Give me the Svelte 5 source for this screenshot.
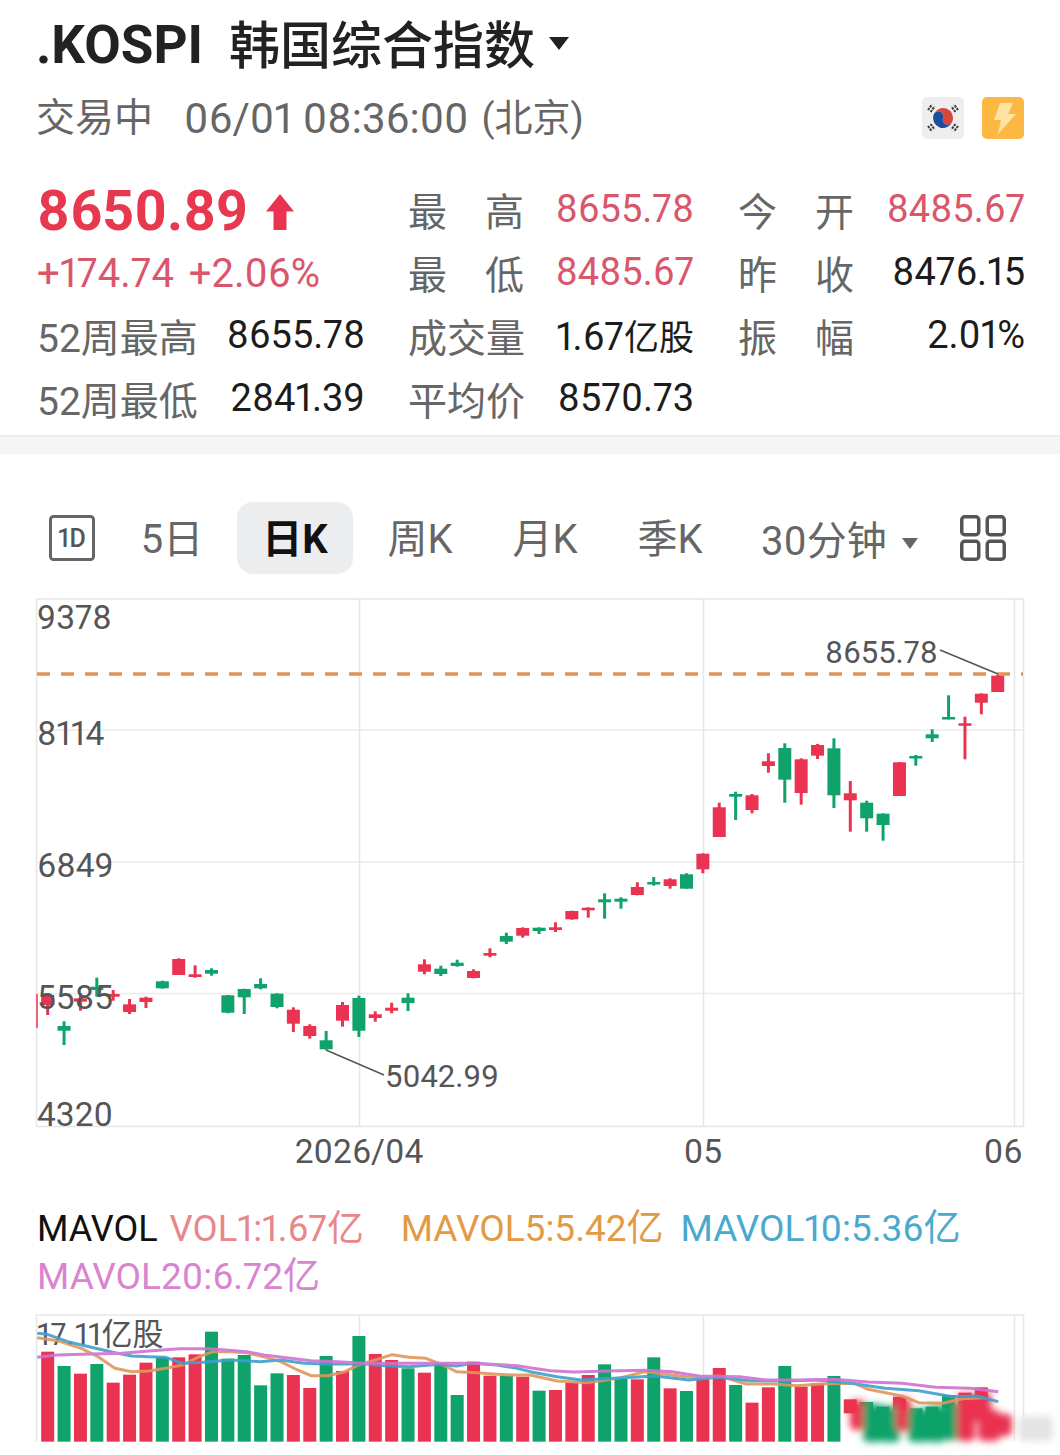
<script>
  const RED = '#ea3350';
  const GREEN = '#0fa26b';

  // x of candle i, same slot is used by the volume bars
  const slot = (i) => 31.3 + 16.38 * i;

  // [index, up?, wick top, body top, body bottom, wick bottom], page pixels
  const candles = [
    [1, 1, 994, 995, 1005, 1015], [2, 0, 1021.3, 1026, 1030.7, 1045], [3, 1, 993.3, 998.3, 1001.7, 1010.7],
    [4, 0, 977.7, 986.7, 990, 996.7], [5, 1, 990, 994, 996.7, 1000.7], [6, 1, 999, 1004.3, 1012, 1014],
    [7, 1, 996.7, 997.7, 1002, 1008], [8, 0, 980.7, 981.3, 988.3, 988.7], [9, 1, 958.3, 959, 975, 975],
    [10, 1, 965.3, 974.3, 977, 977.7], [11, 0, 968.3, 970, 973.7, 975.7], [12, 0, 995, 995.3, 1012.7, 1013.3],
    [13, 0, 988.7, 989, 997.3, 1014], [14, 0, 978.3, 984, 988.3, 989.3], [15, 0, 993.3, 993.7, 1007, 1008.3],
    [16, 1, 1007.3, 1009.7, 1023.7, 1032], [17, 1, 1024.3, 1026, 1036, 1038.7], [18, 0, 1031, 1040.3, 1049.3, 1049.7],
    [19, 1, 1002, 1005, 1020.7, 1026.7], [20, 0, 995.7, 998, 1030.7, 1037], [21, 1, 1011.3, 1014.3, 1018, 1021.7],
    [22, 1, 1002.7, 1007.7, 1010.7, 1013.3], [23, 0, 993.3, 997.7, 1003, 1011], [24, 1, 959.3, 964.3, 971.7, 974.3],
    [25, 0, 965.7, 968.7, 974, 976], [26, 0, 959.7, 962.7, 966, 966.7], [27, 1, 969.3, 971, 978, 978.3],
    [28, 1, 948.3, 953, 955.7, 957.3], [29, 0, 932.7, 936, 941.7, 944], [30, 1, 927.3, 928, 935.7, 937.7],
    [31, 0, 927.3, 927.7, 931, 934], [32, 1, 922.3, 927.3, 930, 932], [33, 1, 910.7, 911, 919.3, 919.7],
    [34, 1, 907.3, 907.7, 910.3, 917.7], [35, 0, 893.3, 899.3, 902.3, 918.7], [36, 0, 897.3, 898.7, 901.7, 908.7],
    [37, 1, 882.3, 887, 895, 895.3], [38, 0, 877, 882, 884, 885.7], [39, 1, 878.3, 879.3, 886, 888.7],
    [40, 0, 873.3, 874.3, 888.7, 888.7], [41, 1, 853.3, 853.7, 869.3, 873.3], [42, 1, 802.7, 807.3, 837, 837],
    [43, 0, 791.7, 794, 796.7, 820], [44, 1, 794, 795.3, 810, 813.3], [45, 1, 753.3, 761.3, 766, 772.7],
    [46, 0, 743.3, 748, 779.7, 802.7], [47, 1, 758.3, 759.3, 793, 804.7], [48, 1, 744, 745, 755.7, 759],
    [49, 0, 738.3, 748.3, 795.3, 808], [50, 1, 781, 793.3, 800.3, 831.7], [51, 0, 800.7, 802.7, 818.3, 831.7],
    [52, 0, 813.3, 813.7, 825, 840.7], [53, 1, 762, 762.3, 796, 796], [54, 0, 755, 756, 758.3, 765.7],
    [55, 0, 729.3, 734.3, 738.3, 742], [56, 0, 695.3, 717, 719.3, 719.3], [57, 1, 716.7, 723.3, 725.7, 759.3],
    [58, 1, 693.3, 693.7, 702.7, 714.3], [59, 1, 675, 675.7, 692, 692]
  ];

  const upByIndex = Object.fromEntries(candles.map((c) => [c[0], c[1]]));

  // bar tops in thirds of a pixel below y=1300, from index 1
  const volumeTops = [
    155, 198, 221, 192, 248, 224, 188, 172, 172, 163, 95, 176, 165, 256, 220, 225, 264, 168, 213, 108,
    162, 180, 205, 218, 190, 285, 185, 227, 228, 230, 272, 270, 248, 225, 193, 235, 238, 172, 265, 273,
    238, 204, 255, 308, 262, 198, 260, 250, 228, 298, 306, 320, 290, 325, 320, 285, 278, 262, 330
  ];
  const volumes = volumeTops.map((z, n) => ({
    x: slot(n + 1),
    y: 1300 + z / 3,
    h: (425 - z) / 3,
    up: upByIndex[n + 1]
  }));

  // the end of the picture is smeared out in the source
  const smears = [
    [850, 1400, 15, 30, RED], [863, 1404, 20, 38, GREEN], [880, 1406, 20, 36, GREEN], [896, 1398, 15, 33, RED],
    [908, 1409, 22, 33, GREEN], [926, 1406, 20, 36, GREEN], [943, 1402, 19, 38, GREEN], [957, 1394, 18, 47, RED],
    [974, 1392, 17, 30, RED], [978, 1410, 22, 31, RED], [994, 1414, 18, 22, RED], [1019, 1416, 34, 25, '#e4e4e4']
  ];

  const toPath = (pts, ox) => pts.map(([x, y]) => `${ox + x / 2.958},${1300 + y / 3}`).join(' ');

  const ma5 = toPath([[110,113],[170,122],[240,145],[290,170],[340,205],[390,215],[440,213],[490,205],[540,195],[590,170],[630,155],[680,155],[730,158],[780,170],[830,185],[880,210],[920,227],[970,227],[1020,215],[1060,195],[1110,180],[1160,164],[1210,172],[1260,175],[1310,195],[1350,215],[1410,218],[1460,222],[1510,225],[1568,225]], 0)
    + ' ' + toPath([[0,225],[80,243],[170,248],[260,235],[340,215],[420,225],[500,235],[560,228],[640,252],[720,252],[790,257],[860,252],[960,250],[1000,268],[1100,288],[1150,308],[1220,310],[1280,296],[1340,293]], 530);
  const ma10 = toPath([[110,100],[140,103],[200,125],[270,142],[340,158],[390,168],[440,170],[490,172],[540,190],[600,187],[680,180],[770,185],[830,180],[900,190],[960,192],[1020,192],[1080,192],[1140,197],[1210,200],[1300,193],[1350,198],[1400,190],[1470,195],[1530,205],[1568,215]], 0)
    + ' ' + toPath([[0,215],[80,230],[150,240],[250,235],[370,228],[470,240],[560,232],[650,242],[750,243],[850,240],[950,250],[1050,265],[1150,272],[1250,290],[1320,288],[1385,305]], 530);
  const ma20 = toPath([[110,172],[170,165],[270,162],[360,160],[450,152],[530,146],[620,146],[730,155],[780,165],[860,175],[920,182],[1000,185],[1070,190],[1150,190],[1250,190],[1400,190],[1530,197],[1568,203]], 0)
    + ' ' + toPath([[0,203],[60,212],[130,216],[230,213],[340,211],[420,215],[500,228],[620,230],[700,240],[800,240],[900,238],[1000,246],[1100,250],[1200,262],[1300,265],[1385,275]], 530);

  const midStats = [
    { label: ['最', '高'], value: '8655.78', red: true },
    { label: ['最', '低'], value: '8485.67', red: true },
    { label: ['成', '交', '量'], value: '1.67', unit: '亿股' },
    { label: ['平', '均', '价'], value: '8570.73' }
  ];
  const rightStats = [
    { label: ['今', '开'], value: '8485.67', red: true },
    { label: ['昨', '收'], value: '8476.15' },
    { label: ['振', '幅'], value: '2.01%' }
  ];
  const tabs = ['周K', '月K', '季K'];
  const gridX = [359.5, 703.5, 1014.5];
  const priceGridY = [730, 862, 993.5];
</script>

<div class="page">
  <header class="head">
    <h1 class="title">
      <span class="title-code">.KOSPI</span><span class="title-cn">韩国综合指数</span>
      <i class="caret caret--title"></i>
    </h1>
    <div class="sub">
      <span class="sub-state">交易中</span>
      <span class="sub-time">06/01 08:36:00</span>
      <span class="sub-zone">(北京)</span>
      <span class="badges">
        <svg class="badge" viewBox="0 0 42 42" aria-hidden="true">
          <rect width="42" height="42" rx="5" fill="#eeeeee" />
          <path d="M11 21a10 10 0 0 1 20 0a5 5 0 0 1-10 0a5 5 0 0 0-10 0z" fill="#d9473c" transform="rotate(20 21 21)" />
          <path d="M11 21a5 5 0 0 1 10 0a5 5 0 0 0 10 0a10 10 0 0 1-20 0z" fill="#1b4f9e" transform="rotate(20 21 21)" />
          <g stroke="#3a3a3a" stroke-width="2" stroke-dasharray="2.4 .9">
            <path d="M6 13l4-5.5M8.6 15l4-5.5" />
            <path d="M36 13l-4-5.5M33.4 15l-4-5.5" />
            <path d="M6 29l4 5.5M8.6 27l4 5.5" />
            <path d="M36 29l-4 5.5M33.4 27l-4 5.5" />
          </g>
        </svg>
        <svg class="badge" viewBox="0 0 42 42" aria-hidden="true">
          <rect width="42" height="42" rx="5" fill="#fdb843" />
          <path d="M18 6h13l-5 11h8L16 37l3-14h-7z" fill="#fde3a4" />
        </svg>
      </span>
    </div>
  </header>

  <section class="stats">
    <div class="col col--left">
      <div class="row">
        <span class="price">8650.89</span>
        <svg class="arrow" viewBox="0 0 30 36" aria-hidden="true">
          <path d="M15 0L29 17.500H21.500V36H8.500V17.500H1z" fill={RED} />
        </svg>
      </div>
      <div class="row change"><span>+174.74</span><span>+2.06%</span></div>
      <div class="row between"><span class="label">52周最高</span><span>8655.78</span></div>
      <div class="row between"><span class="label">52周最低</span><span>2841.39</span></div>
    </div>
    <div class="col col--mid">
      {#each midStats as s}
        <div class="row between">
          <span class="label spread">{#each s.label as c}<span>{c}</span>{/each}</span>
          <span class:red={s.red}>{s.value}{#if s.unit}<span class="unit">{s.unit}</span>{/if}</span>
        </div>
      {/each}
    </div>
    <div class="col col--right">
      {#each rightStats as s}
        <div class="row between">
          <span class="label spread">{#each s.label as c}<span>{c}</span>{/each}</span>
          <span class:red={s.red}>{s.value}</span>
        </div>
      {/each}
    </div>
  </section>

  <div class="band"></div>

  <nav class="tabs">
    <svg class="tool" viewBox="0 0 46 46" aria-hidden="true">
      <rect x="1.500" y="1.500" width="43" height="43" rx="3" fill="none" stroke="#666" stroke-width="3" />
      <text x="23" y="32" text-anchor="middle" class="tool-text">1D</text>
    </svg>
    <span class="tab tab--five">5日</span>
    <span class="tab tab--on">日K</span>
    {#each tabs as t}
      <span class="tab">{t}</span>
    {/each}
    <span class="tab-more">30分钟<i class="caret caret--tab"></i></span>
    <svg class="tool" viewBox="0 0 46 46" aria-hidden="true">
      <g fill="none" stroke="#555" stroke-width="3.500">
        <rect x="1.750" y="1.750" width="17" height="18" rx="3" />
        <rect x="27.250" y="1.750" width="17" height="18" rx="3" />
        <rect x="1.750" y="26.250" width="17" height="18" rx="3" />
        <rect x="27.250" y="26.250" width="17" height="18" rx="3" />
      </g>
    </svg>
  </nav>

  <svg class="chart" viewBox="0 590 1060 590" aria-label="K线图">
    <rect x="36.500" y="599" width="987" height="527.500" fill="none" stroke="#e6e6e6" stroke-width="1.500" />
    {#each priceGridY as y}
      <line x1="36.500" x2="1023.500" y1={y} y2={y} stroke="#ebebeb" stroke-width="1.500" />
    {/each}
    {#each gridX as x}
      <line x1={x} x2={x} y1="599" y2="1126.500" stroke="#e6e6e6" stroke-width="1.500" />
    {/each}
    <line x1="37" x2="1023" y1="674" y2="674" stroke="#e0935a" stroke-width="3.500" stroke-dasharray="13 11" />

    <line x1="37" x2="37" y1="994" y2="1028" stroke={RED} stroke-width="1.500" />
    {#each candles as [i, up, wt, bt, bb, wb]}
      <line x1={slot(i)} x2={slot(i)} y1={wt} y2={wb} stroke={up ? RED : GREEN} stroke-width="3" />
      <rect x={slot(i) - 6.500} y={bt} width="13" height={Math.max(bb - bt, 2.500)} fill={up ? RED : GREEN} />
    {/each}

    <line x1="940" y1="650" x2="998" y2="674" stroke="#555" stroke-width="1.500" />
    <line x1="326" y1="1050" x2="384" y2="1075" stroke="#555" stroke-width="1.500" />

    <text class="axis" x="37" y="629">9378</text>
    <text class="axis" x="37" y="745">8114</text>
    <text class="axis" x="37" y="876.500">6849</text>
    <text class="axis" x="37" y="1009">5585</text>
    <text class="axis" x="37" y="1126">4320</text>
    <text class="axis axis--note" x="825" y="663">8655.78</text>
    <text class="axis axis--note" x="385" y="1087">5042.99</text>
    <text class="axis" x="359" y="1162.500" text-anchor="middle">2026/04</text>
    <text class="axis" x="703" y="1162.500" text-anchor="middle">05</text>
    <text class="axis" x="1003" y="1162.500" text-anchor="middle">06</text>
  </svg>

  <div class="legend">
    <span class="leg-name">MAVOL</span>
    <span class="leg-v1">VOL1:1.67亿</span>
    <span class="leg-5">MAVOL5:5.42亿</span>
    <span class="leg-10">MAVOL10:5.36亿</span>
    <span class="leg-20">MAVOL20:6.72亿</span>
  </div>

  <svg class="volume" viewBox="0 1301 1060 154" aria-label="成交量">
    <defs>
      <filter id="smear" x="-30%" y="-30%" width="160%" height="160%">
        <feGaussianBlur stdDeviation="3.500" />
      </filter>
    </defs>
    <path d="M36.500 1441.500V1315H1023.500V1441.500" fill="none" stroke="#e8e8e8" stroke-width="1.500" />
    {#each gridX as x}
      <line x1={x} x2={x} y1="1315" y2="1441" stroke="#e6e6e6" stroke-width="1.500" />
    {/each}
    <text class="axis axis--vol" x="37" y="1345">17.11亿股</text>
    {#each volumes as v, n}
      {#if n < 49}
        <rect x={v.x - 6.500} y={v.y} width="13" height={v.h} fill={v.up ? RED : GREEN} />
      {:else if n < 58}
        <rect x={v.x - 6.500} y={v.y} width="13" height="14" fill={v.up ? RED : GREEN} />
      {/if}
    {/each}
    <g filter="url(#smear)">
      {#each smears as [x, y, w, h, fill]}
        <rect {x} {y} width={w} height={h} rx="5" {fill} />
      {/each}
    </g>
    <g fill="none" stroke-width="3" stroke-linejoin="round" opacity="0.9">
      <polyline points={ma5} stroke="#e0975a" />
      <polyline points={ma10} stroke="#3fa0cc" />
      <polyline points={ma20} stroke="#cf72d0" />
    </g>
  </svg>
</div>

<style>
  :global(body) {
    margin: 0;
    background: #fff;
  }

  .page {
    width: 1060px;
    height: 1455px;
    overflow: hidden;
    font-family: Roboto, "Noto Sans CJK SC", sans-serif;
    font-size: 38px;
    font-variant-numeric: proportional-nums;
    color: #1c1c1c;
  }

  .head {
    padding: 0 36px 0 36px;
  }

  .title {
    margin: 0;
    height: 84px;
    display: flex;
    align-items: center;
    font-size: 51px;
    font-weight: 500;
    color: #222;
  }

  .title-code {
    margin-top: 6px;
    font-size: 53px;
    font-weight: 700;
  }

  .title-cn {
    margin-left: 26px;
  }

  .caret {
    display: inline-block;
    width: 0;
    height: 0;
    border-style: solid;
    border-color: #222 transparent transparent;
  }

  .caret--title {
    margin: 2px 0 0 14px;
    border-width: 13px 10px 0;
  }

  .caret--tab {
    margin-left: 15px;
    vertical-align: 6px;
    border-width: 11px 8.500px 0;
    border-top-color: #666;
  }

  .sub {
    height: 46px;
    margin-top: 7px;
    display: flex;
    align-items: center;
    color: #666;
    font-size: 39px;
  }

  .sub-state {
    margin-right: 31px;
  }

  .sub-time {
    font-size: 42px;
    line-height: 46px;
    margin-top: 10px;
  }

  .sub-zone {
    margin-left: 13px;
    font-size: 38px;
  }

  .badges {
    margin-left: auto;
    display: flex;
    gap: 18px;
    margin-top: 8px;
  }

  .badge {
    width: 42px;
    height: 42px;
  }

  .stats {
    margin-top: 43px;
    height: 253px;
    padding: 0 36px 0 37px;
    display: flex;
    gap: 43px;
  }

  .col {
    flex: none;
  }

  .col--left {
    width: 328px;
  }

  .col--mid {
    width: 286px;
    margin-top: -3px;
  }

  .col--right {
    width: 287px;
    margin: -3px 0 0 1px;
  }

  .row {
    height: 63px;
    display: flex;
    align-items: center;
  }

  .between {
    justify-content: space-between;
  }

  .label {
    color: #666;
    font-size: 39px;
  }

  .spread {
    width: 116px;
    display: flex;
    justify-content: space-between;
  }

  .red {
    color: #d9566b;
  }

  .unit {
    font-size: 35px;
  }

  .price {
    font-size: 55.500px;
    font-weight: 700;
    color: #e8384f;
  }

  .arrow {
    width: 30px;
    height: 36px;
    margin-left: 16px;
  }

  .change {
    height: 60px;
    gap: 15px;
    color: #d9566b;
    font-size: 40px;
  }

  .band {
    height: 17px;
    margin-top: 2px;
    border-top: 2px solid #ececec;
    background: #f4f5f5;
  }

  .tabs {
    margin-top: 48px;
    height: 72px;
    padding-left: 49px;
    display: flex;
    align-items: center;
    gap: 9px;
    font-size: 40px;
  }

  .tool {
    width: 46px;
    height: 46px;
    flex: none;
  }

  .tool-text {
    font-size: 25px;
    font-weight: 500;
    fill: #555;
    font-family: Roboto, sans-serif;
  }

  .tab {
    width: 116px;
    height: 72px;
    line-height: 75px;
    text-align: center;
    color: #666;
    border-radius: 16px;
  }

  .tab--five {
    margin: 0 -2px 0 10px;
  }

  .tab--on {
    background: #ebedef;
    color: #111;
    font-weight: 700;
  }

  .tab-more {
    margin: 0 33px 0 5px;
    padding-left: 19px;
    color: #666;
    white-space: nowrap;
  }

  .chart {
    display: block;
    width: 1060px;
    height: 590px;
    margin-top: 16px;
  }

  .axis {
    font-size: 33.500px;
    fill: #555;
    font-family: Roboto, "Noto Sans CJK SC", sans-serif;
  }

  .axis--note {
    font-size: 31px;
  }

  .axis--vol {
    font-size: 31px;
  }

  .legend {
    margin-top: 25px;
    padding: 0 36px 0 37px;
    display: flex;
    flex-wrap: wrap;
    font-size: 37px;
    line-height: 48px;
    color: #111;
  }

  .leg-name {
    font-size: 36px;
  }

  .leg-v1 {
    margin-left: 12px;
    font-size: 36.500px;
    color: #e8868a;
  }

  .leg-5 {
    margin-left: 37px;
    color: #e39a45;
  }

  .leg-10 {
    margin-left: 17px;
    color: #4aa9cf;
  }

  .leg-20 {
    color: #d884d0;
  }

  .volume {
    display: block;
    width: 1060px;
    height: 154px;
  }
</style>
